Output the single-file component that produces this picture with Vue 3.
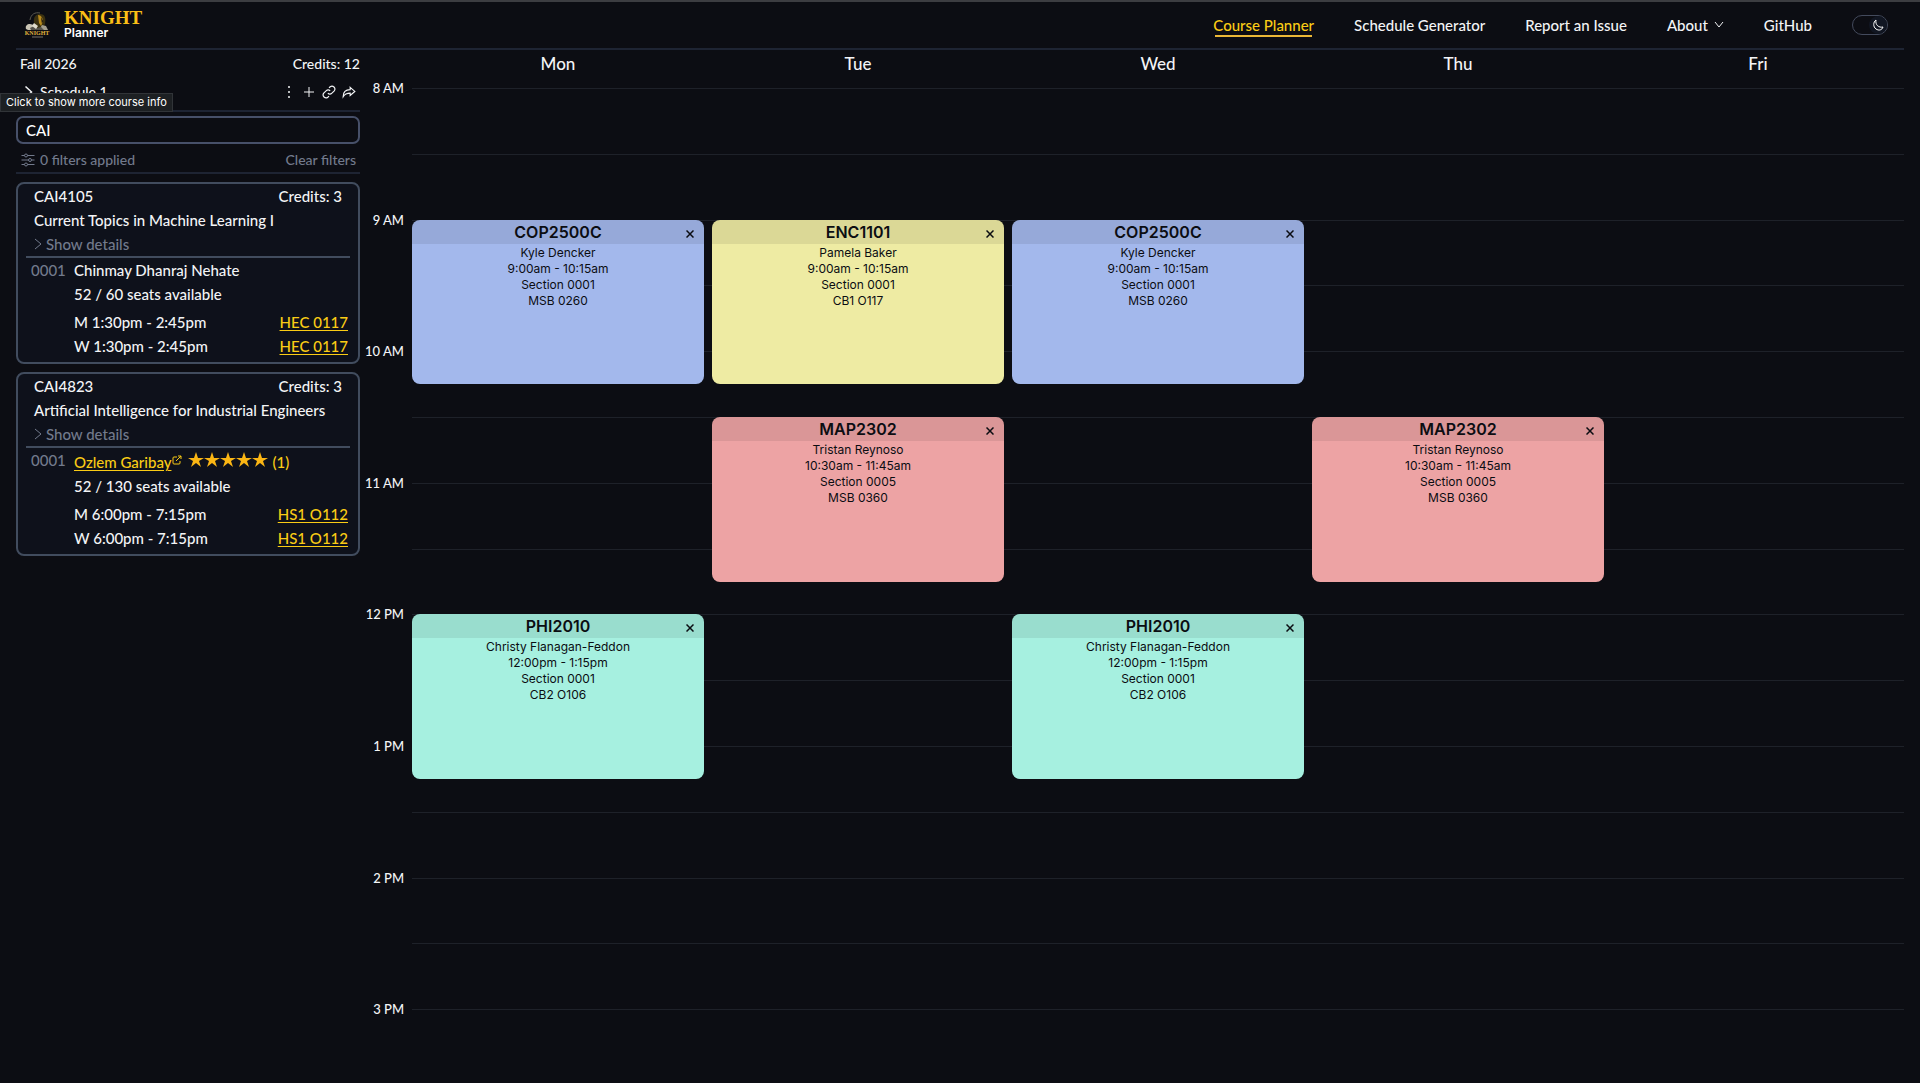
<template>
  <div class="page">
    <header class="topbar">
      <a href="#" class="brand">
        <svg class="logo" width="26" height="28" viewBox="0 0 26 28" aria-hidden="true">
          <path d="M6 9C7 3 11 1 16 2" fill="none" stroke="#5a5850" stroke-width="1" />
          <path d="M10 12C9 6 12 3 16 3c5 0 6 4 5 10l-2 4h-6z" fill="#3b3110" />
          <path d="M14 4c3 0 5 3 5 7l-2 4-2-3z" fill="#b88a1d" />
          <path d="M17 6l2 4-1 3z" fill="#0c0d13" />
          <path d="M2 18c-1-3 1-5 4-5l4 1 3 5H4z" fill="#c9c4b4" />
          <path d="M15 19l3-5 4 1 2 4z" fill="#a39e90" />
          <path d="M6 17l4-2 3 2 4-1 3 3H7z" fill="#55524b" />
          <path d="M10 12l4 3-2 3-4-3z" fill="#e0dbcd" />
          <text x="13" y="24" text-anchor="middle" class="logo-text">KNIGHT</text>
          <path d="M8 26h11" stroke="#77736a" stroke-width="1" />
        </svg>
        <span class="brand-text">
          <span class="brand-name">KNIGHT</span>
          <span class="brand-sub">Planner</span>
        </span>
      </a>
      <nav class="nav">
        <a href="#" class="nav-link active">Course Planner</a>
        <a href="#" class="nav-link">Schedule Generator</a>
        <a href="#" class="nav-link">Report an Issue</a>
        <button type="button" class="nav-link about">
          About
          <svg width="10" height="12" viewBox="0 0 10 12"><path d="M1 3l4 5 4-5" /></svg>
        </button>
        <a href="#" class="nav-link">GitHub</a>
        <button type="button" class="toggle" aria-label="Toggle dark mode">
          <span class="knob">
            <svg width="12" height="12" viewBox="0 0 12 12"><path d="M4 1C1 3 1 8 4 10c3 2 6 1 7-2C7 9 3 6 4 1z" /></svg>
          </span>
        </button>
      </nav>
    </header>

    <div class="main">
      <aside class="sidebar">
        <div class="term">
          <span>Fall 2026</span>
          <span>Credits: 12</span>
        </div>
        <div class="schedule">
          <button type="button" class="schedule-name">
            <svg width="10" height="14" viewBox="0 0 20 28" class="bold"><path d="M3 3l12 11L3 25" /></svg>
            Schedule 1
          </button>
          <div class="tools">
            <button type="button" aria-label="More">
              <svg width="14" height="14" viewBox="0 0 14 14" class="dots">
                <circle cx="7" cy="2" r="1" /><circle cx="7" cy="7" r="1" /><circle cx="7" cy="12" r="1" />
              </svg>
            </button>
            <button type="button" aria-label="Add">
              <svg width="14" height="14" viewBox="0 0 14 14"><path d="M7 2v10M2 7h10" /></svg>
            </button>
            <button type="button" aria-label="Copy link">
              <svg width="14" height="14" viewBox="0 0 24 24" class="bold">
                <path d="M10 14a5 5 0 0 0 7 0l4-4a5 5 0 0 0-7-7l-2 2M14 10a5 5 0 0 0-7 0l-4 4a5 5 0 0 0 7 7l2-2" />
              </svg>
            </button>
            <button type="button" aria-label="Share">
              <svg width="14" height="14" viewBox="0 0 24 24" class="bold">
                <path d="M14 4l8 7-8 7v-4C8 14 5 15 2 20c0-7 4-12 12-12z" />
              </svg>
            </button>
          </div>
          <div class="tooltip" role="tooltip">Click to show more course info</div>
        </div>

        <input v-model="query" type="text" class="search" aria-label="Search courses" />

        <div class="filters">
          <button type="button" class="filter-btn">
            <svg width="14" height="14" viewBox="0 0 28 28" class="bold">
              <path d="M1 5h6M13 5h14M1 14h14M21 14h6M1 23h6M13 23h14" />
              <circle cx="10" cy="5" r="3" /><circle cx="18" cy="14" r="3" /><circle cx="10" cy="23" r="3" />
            </svg>
            0 filters applied
          </button>
          <button type="button" class="filter-btn">Clear filters</button>
        </div>

        <article v-for="c in courses" :key="c.code" class="course">
          <div class="course-head">
            <div class="course-row">
              <span>{{ c.code }}</span>
              <span>Credits: 3</span>
            </div>
            <div>{{ c.title }}</div>
            <button type="button" class="details">
              <svg width="8" height="12" viewBox="0 0 8 12"><path d="M1 1l6 5-6 5" /></svg>
              Show details
            </button>
          </div>
          <div class="section">
            <span class="section-no">0001</span>
            <div class="section-info">
              <div v-if="c.rated" class="prof">
                <a href="#">{{ c.prof }}</a>
                <svg width="10" height="10" viewBox="0 0 10 10" class="ext">
                  <path d="M5 2H2a1 1 0 0 0-1 1v5a1 1 0 0 0 1 1h5a1 1 0 0 0 1-1V6M4 6l5-5M6 1h3v3" />
                </svg>
                <span class="stars">
                  <svg v-for="n in 5" :key="n" width="16" height="16" viewBox="0 0 16 16">
                    <path d="M8 0l2 6h6l-5 3 2 6-5-4-5 4 2-6-5-3h6z" />
                  </svg>
                </span>
                <span>(1)</span>
              </div>
              <div v-else>{{ c.prof }}</div>
              <div>{{ c.seats }} seats available</div>
              <div class="meetings">
                <div v-for="d in ['M', 'W']" :key="d" class="course-row">
                  <span>{{ d }} {{ c.time }}</span>
                  <a href="#">{{ c.room }}</a>
                </div>
              </div>
            </div>
          </div>
        </article>
      </aside>

      <section class="calendar">
        <div class="days">
          <div v-for="d in days" :key="d">{{ d }}</div>
        </div>
        <div class="hours">
          <div v-for="h in hours" :key="h" class="hour">{{ h }}</div>
        </div>
        <div class="grid">
          <div v-for="n in 15" :key="n" class="line" :style="{ gridRow: `${n * 2 - 1} / span 2` }"></div>
          <div
            v-for="e in events"
            :key="e.code + e.day"
            class="event"
            :class="e.color"
            :style="{ gridColumn: e.day, gridRow: `${(e.start - 8) * 4 + 1} / span 5` }"
          >
            <div class="event-head">
              {{ e.code }}
              <button type="button" class="close" :aria-label="'Remove ' + e.code">
                <svg width="8" height="8" viewBox="0 0 16 16"><path d="M1 1l14 14M15 1L1 15" /></svg>
              </button>
            </div>
            <div>{{ e.prof }}</div>
            <div>{{ e.time }}</div>
            <div>Section {{ e.section }}</div>
            <div>{{ e.room }}</div>
          </div>
        </div>
      </section>
    </div>
  </div>
</template>

<script setup>
import { ref } from 'vue'

const query = ref('CAI')

const days = ['Mon', 'Tue', 'Wed', 'Thu', 'Fri']
const hours = ['8 AM', '9 AM', '10 AM', '11 AM', '12 PM', '1 PM', '2 PM', '3 PM']

const courses = [
  { code: 'CAI4105', title: 'Current Topics in Machine Learning I', prof: 'Chinmay Dhanraj Nehate', rated: false, seats: '52 / 60', time: '1:30pm - 2:45pm', room: 'HEC 0117' },
  { code: 'CAI4823', title: 'Artificial Intelligence for Industrial Engineers', prof: 'Ozlem Garibay', rated: true, seats: '52 / 130', time: '6:00pm - 7:15pm', room: 'HS1 O112' }
]

const cop = { code: 'COP2500C', prof: 'Kyle Dencker', time: '9:00am - 10:15am', section: '0001', room: 'MSB 0260', start: 9, color: 'blue' }
const enc = { code: 'ENC1101', prof: 'Pamela Baker', time: '9:00am - 10:15am', section: '0001', room: 'CB1 O117', start: 9, color: 'yellow' }
const map = { code: 'MAP2302', prof: 'Tristan Reynoso', time: '10:30am - 11:45am', section: '0005', room: 'MSB 0360', start: 10.5, color: 'red' }
const phi = { code: 'PHI2010', prof: 'Christy Flanagan-Feddon', time: '12:00pm - 1:15pm', section: '0001', room: 'CB2 O106', start: 12, color: 'green' }

const events = [
  { ...cop, day: 1 },
  { ...enc, day: 2 },
  { ...cop, day: 3 },
  { ...map, day: 2 },
  { ...map, day: 4 },
  { ...phi, day: 1 },
  { ...phi, day: 3 }
]
</script>

<style>
body { margin: 0; background: #0c0d13; }
</style>

<style scoped>
.page { box-sizing: border-box; min-height: 100vh; display: flex; flex-direction: column; padding: 0 16px; border-top: 2px solid #3c3d41; background: #0c0d13; color: #f3f4f6; font: 500 15px/24px Lato, sans-serif; }
a { color: #facc15; text-underline-offset: 2px; }
button { padding: 0; border: 0; background: none; color: inherit; font: inherit; cursor: pointer; }
svg { flex: none; fill: none; stroke: currentColor; }

.topbar { display: flex; justify-content: space-between; height: 46px; border-bottom: 2px solid #1e2433; }
.brand { display: flex; align-items: center; gap: 14px; padding-left: 8px; text-decoration: none; }
.logo { stroke: none; }
.logo-text { fill: #e0b43c; font: bold 6px "Liberation Serif", serif; }
.brand-text { display: flex; flex-direction: column; }
.brand-name { color: #fbbf16; font: bold 19px/16px "Liberation Serif", serif; }
.brand-sub { color: #fff; font: 600 12px/14px Inter, sans-serif; }
.nav { display: flex; align-items: center; gap: 40px; padding-right: 16px; }
.nav-link { position: relative; color: #f3f4f6; text-decoration: none; }
.active { color: #facc15; }
.active::after { content: ''; position: absolute; left: 2px; right: 2px; bottom: 0; height: 2px; background: #eab737; }
.about { display: flex; align-items: center; gap: 6px; }
.toggle { box-sizing: border-box; display: flex; justify-content: flex-end; width: 36px; height: 20px; border: 1px solid #434a5c; border-radius: 10px; }
.knob { box-sizing: border-box; display: flex; align-items: center; justify-content: center; width: 18px; height: 18px; border-radius: 50%; background: #111622; color: #fff; }

.main { flex: 1; display: flex; }
.sidebar { flex: none; width: 344px; }
.term { display: flex; justify-content: space-between; padding: 2px 0 0 4px; font-size: 14px; }
.schedule { position: relative; display: flex; justify-content: space-between; height: 28px; padding: 2px 4px 4px 8px; border-bottom: 2px solid #1e2433; font-size: 14px; }
.schedule-name { display: flex; align-items: center; gap: 6px; }
.tools { display: flex; align-items: center; gap: 6px; }
.tools button { display: flex; }
.dots { fill: currentColor; stroke: none; }
.bold { stroke-width: 2; }
.schedule-name .bold { stroke-width: 3; }
.tooltip { position: absolute; left: -16px; top: 17px; box-sizing: border-box; padding: 0 5px; border: 1px solid #313438; background: #1d2023; color: #fff; font: 11px/17px Inter, sans-serif; white-space: nowrap; }
.search { box-sizing: border-box; display: block; width: 100%; height: 28px; margin-top: 4px; padding: 0 8px; border: 2px solid #475069; border-radius: 7px; background: transparent; color: #fff; font: inherit; outline: none; }
.filters { display: flex; justify-content: space-between; padding: 4px 4px 0 5px; border-bottom: 2px solid #1e2433; color: #727a8c; font-size: 14px; }
.filter-btn { display: flex; align-items: center; gap: 5px; }

.course { margin-top: 8px; padding: 0 8px 4px; border: 2px solid #414c5e; border-radius: 8px; background: #0e111b; }
.course-head { padding: 0 8px; border-bottom: 2px solid #414c5e; }
.course-row { display: flex; justify-content: space-between; }
.details { display: flex; align-items: center; gap: 4px; color: #727a8c; }
.section { display: flex; gap: 5px; padding: 0 2px 0 5px; }
.section-no { width: 38px; color: #727a8c; }
.section-info { flex: 1; }
.prof { display: flex; align-items: center; color: #facc15; padding-top: 2px; }
.ext { margin: 0 6px 4px 1px; }
.stars { display: flex; margin: 0 4px 4px 0; }
.stars svg { fill: #fbb614; stroke: none; }
.meetings { padding-top: 4px; }

.calendar { flex: 1; display: grid; grid-template-columns: 52px 1fr; grid-template-rows: 38px 1fr; padding-bottom: 8px; }
.days { grid-column: 2; display: grid; grid-template-columns: repeat(5, 1fr); column-gap: 8px; line-height: 28px; font-size: 17px; text-align: center; }
.hours { display: grid; grid-template-rows: repeat(15, 1fr); font-size: 13px; }
.hour { grid-row: span 2; padding-right: 8px; height: 0; line-height: 0; text-align: right; }
.grid { display: grid; grid-template-columns: repeat(5, 1fr); grid-template-rows: repeat(30, minmax(0, 1fr)); column-gap: 8px; }
.line { grid-column: 1 / -1; border-top: 1px solid #1e2129; }
.event { overflow: hidden; border-radius: 8px; color: #0b0d12; font: 12px/16px Inter, sans-serif; text-align: center; }
.event-head { position: relative; margin-bottom: 1px; background: rgba(0, 0, 0, 0.08); font-size: 16px; line-height: 24px; font-weight: 600; }
.close { position: absolute; right: 10px; top: 10px; display: flex; }
.close svg { stroke-width: 3; }
.blue { background: #a3b8ec; }
.yellow { background: #eeeba3; }
.red { background: #eda3a4; }
.green { background: #a6f0e0; }
</style>
